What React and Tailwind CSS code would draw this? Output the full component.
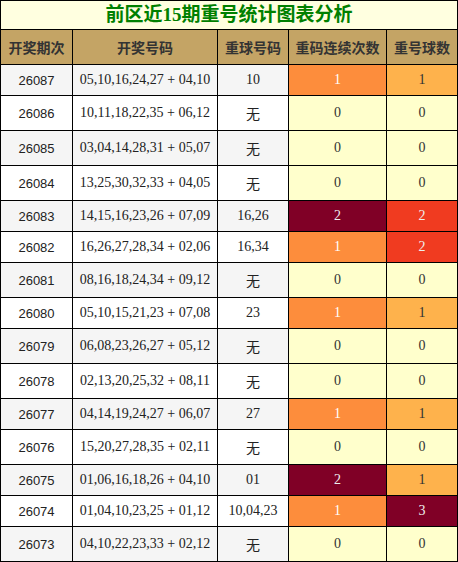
import React from 'react';

// 前区重号统计数据
const rows = [
  { issue: '26087', nums: '05,10,16,24,27 + 04,10', rep: '10', streak: 1, count: 1 },
  { issue: '26086', nums: '10,11,18,22,35 + 06,12', rep: '无', streak: 0, count: 0 },
  { issue: '26085', nums: '03,04,14,28,31 + 05,07', rep: '无', streak: 0, count: 0 },
  { issue: '26084', nums: '13,25,30,32,33 + 04,05', rep: '无', streak: 0, count: 0 },
  { issue: '26083', nums: '14,15,16,23,26 + 07,09', rep: '16,26', streak: 2, count: 2 },
  { issue: '26082', nums: '16,26,27,28,34 + 02,06', rep: '16,34', streak: 1, count: 2 },
  { issue: '26081', nums: '08,16,18,24,34 + 09,12', rep: '无', streak: 0, count: 0 },
  { issue: '26080', nums: '05,10,15,21,23 + 07,08', rep: '23', streak: 1, count: 1 },
  { issue: '26079', nums: '06,08,23,26,27 + 05,12', rep: '无', streak: 0, count: 0 },
  { issue: '26078', nums: '02,13,20,25,32 + 08,11', rep: '无', streak: 0, count: 0 },
  { issue: '26077', nums: '04,14,19,24,27 + 06,07', rep: '27', streak: 1, count: 1 },
  { issue: '26076', nums: '15,20,27,28,35 + 02,11', rep: '无', streak: 0, count: 0 },
  { issue: '26075', nums: '01,06,16,18,26 + 04,10', rep: '01', streak: 2, count: 1 },
  { issue: '26074', nums: '01,04,10,23,25 + 01,12', rep: '10,04,23', streak: 1, count: 3 },
  { issue: '26073', nums: '04,10,22,23,33 + 02,12', rep: '无', streak: 0, count: 0 },
];

const streakColor = {
  0: 'bg-[#ffffcc] text-[#333]',
  1: 'bg-[#fd8d3c] text-[#fff]',
  2: 'bg-[#800026] text-[#eee]',
};

const countColor = {
  0: 'bg-[#ffffcc] text-[#333]',
  1: 'bg-[#feb24c] text-[#333]',
  2: 'bg-[#f03b20] text-[#eee]',
  3: 'bg-[#800026] text-[#eee]',
};

const serif = "font-['Liberation_Serif','Noto_Sans_CJK_SC',serif]";
const cjk = "font-['Noto_Sans_CJK_SC',sans-serif]";

const App = () => {
  return (
    <div className="w-[458px] bg-white leading-[normal]">
      <table className="w-[458px] table-fixed border-collapse border border-black text-center">
        <colgroup>
          <col className="w-[72px]" />
          <col className="w-[145px]" />
          <col className="w-[71px]" />
          <col className="w-[98px]" />
          <col className="w-[71px]" />
        </colgroup>
        <thead>
          <tr>
            <th colSpan={5} className={`h-[29px] p-0 border border-black bg-[#ffffe0] text-[19px] leading-[26px] font-bold text-[#008000] ${serif}`}>
              前区近15期重号统计图表分析
            </th>
          </tr>
          <tr className="bg-[#c4a465]">
            {['开奖期次', '开奖号码', '重球号码', '重码连续次数', '重号球数'].map((h) => (
              <th key={h} className={`border border-black py-[7px] px-0 text-[14px] font-bold text-[#333] ${cjk}`}>
                {h}
              </th>
            ))}
          </tr>
        </thead>
        <tbody>
          {rows.map((r, i) => {
            const stripe = i % 2 === 0 ? 'bg-[#f5f5f5]' : 'bg-white';
            return (
              <tr key={r.issue} className="text-[#222]">
                <td className={`${stripe} border border-black py-[7px] px-0 text-[13px] font-['Liberation_Sans',sans-serif]`}>{r.issue}</td>
                <td className={`${stripe} border border-black py-[7px] px-0 text-[14px] ${serif}`}>{r.nums}</td>
                <td className={`${stripe} border border-black py-[7px] px-0 text-[14px] ${serif}`}>{r.rep}</td>
                <td className={`${streakColor[r.streak]} border border-black py-[7px] px-0 text-[14px] ${serif}`}>{r.streak}</td>
                <td className={`${countColor[r.count]} border border-black py-[7px] px-0 text-[14px] ${serif}`}>{r.count}</td>
              </tr>
            );
          })}
        </tbody>
      </table>
    </div>
  );
};

export default App;
